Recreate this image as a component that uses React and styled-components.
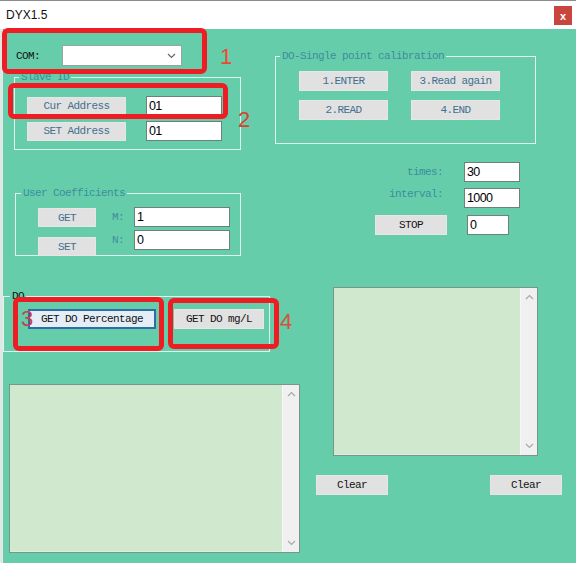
import React from 'react'
import styled, { createGlobalStyle } from 'styled-components'

const GlobalStyle = createGlobalStyle`
  *, *::before, *::after { box-sizing: border-box; }
  html, body { margin: 0; padding: 0; background: #66cdaa; }
  body { width: 576px; height: 563px; overflow: hidden; }
`;

const dlgFont = `"Liberation Mono", "DejaVu Sans Mono", monospace`;

const Window = styled.div`
    position: relative;
    width: 576px;
    height: 563px;
    display: flex;
    flex-direction: column;
    font-family: ${dlgFont};
    font-size: 11px;
    letter-spacing: -0.6px;
    color: #111;
`;

const TitleBar = styled.div`
    height: 29px;
    border-top: 1px solid #8c8c8c;
    background: #fff;
    display: flex;
    align-items: center;
    justify-content: space-between;
    padding: 0 4px 0 6px;
    font-family: "Liberation Sans", Arial, sans-serif;
    font-size: 12px;
    letter-spacing: 0;
    color: #111;
`;

const CloseBtn = styled.div`
    width: 18px;
    height: 19px;
    margin-top: 1px;
    background: #c8463d;
    color: #fff;
    display: flex;
    align-items: center;
    justify-content: center;
    font-size: 11px;
    font-weight: bold;
`;

const Body = styled.div`
    flex: 1;
    display: flex;
    background: #66cdaa;
    border-left: 3px solid #dfe8e4;
`;

const Column = styled.div`
    width: ${p => p.$w ? `${p.$w}px` : 'auto'};
    flex: ${p => p.$w ? 'none' : '1'};
    display: flex;
    flex-direction: column;
    align-items: flex-start;
`;

const ComRow = styled.div`
    margin: 16px 0 0 13px;
    display: flex;
    align-items: center;
`;

const ComLabel = styled.span`
    width: 46px;
`;

const Combo = styled.div`
    width: 120px;
    height: 21px;
    background: #fff;
    border: 1px solid #9aa39f;
    display: flex;
    align-items: center;
    justify-content: flex-end;
    padding-right: 5px;
`;

const Group = styled.fieldset`
    margin: ${p => p.$mt}px 0 0 ${p => p.$ml || 0}px;
    padding: 0;
    min-inline-size: 0;
    width: ${p => p.$w}px;
    height: ${p => p.$h}px;
    border: 1px solid rgba(255, 255, 255, 0.8);
`;

const Legend = styled.legend`
    margin-left: ${p => p.$ml ?? 4}px;
    padding: 0 2px;
    line-height: 12px;
    color: ${p => p.$dark ? '#111' : '#3b8e9e'};
`;

const Inner = styled.div`
    padding: ${p => p.$pt}px 0 0 ${p => p.$pl}px;
    display: flex;
    flex-direction: ${p => p.$col ? 'column' : 'row'};
    gap: ${p => p.$gap || 0}px;
`;

const Row = styled.div`
    display: flex;
    align-items: center;
    gap: ${p => p.$gap || 0}px;
`;

const Stack = styled.div`
    display: flex;
    flex-direction: column;
    gap: ${p => p.$gap}px;
    padding-top: ${p => p.$pt || 0}px;
`;

const Btn = styled.button`
    width: ${p => p.$w}px;
    height: ${p => p.$h || 20}px;
    padding: 0;
    background: ${p => p.$focus ? '#e5eef7' : '#e1e1e1'};
    border: ${p => p.$focus ? '2px solid #2b6ea8' : '1px solid #e6e6e6'};
    font: inherit;
    letter-spacing: inherit;
    color: ${p => p.$blue ? '#43708f' : '#111'};
    white-space: nowrap;
`;

const Input = styled.input`
    width: ${p => p.$w}px;
    height: 20px;
    margin-top: ${p => p.$mt || 0}px;
    padding: 0 0 1px 2px;
    background: #fff;
    border: 1px solid #6f807a;
    font-family: "Liberation Sans", Arial, sans-serif;
    font-size: 12.5px;
    letter-spacing: -0.6px;
    color: #000;
    outline: none;
`;

const Label = styled.span`
    width: ${p => p.$w}px;
    text-align: ${p => p.$right ? 'right' : 'left'};
    align-self: ${p => p.$top ? 'flex-start' : 'center'};
    line-height: 12px;
    color: #3b8e9e;
`;

const BtnGrid = styled.div`
    display: grid;
    grid-template-columns: 89px 89px;
    column-gap: 23px;
    row-gap: 9px;
    padding: 9px 0 0 23px;
`;

const ParamRow = styled.div`
    display: flex;
    align-items: center;
    margin-top: ${p => p.$mt}px;
    padding-left: ${p => p.$pl}px;
    gap: ${p => p.$gap}px;
`;

const TextBox = styled.div`
    margin: ${p => p.$mt}px 0 0 ${p => p.$ml}px;
    width: ${p => p.$w}px;
    height: ${p => p.$h}px;
    flex: none;
    display: flex;
    border: 1px solid #7a958b;
    background: #cfe8ce;
`;

const TextArea = styled.div`
    flex: 1;
    border-bottom: 1px solid #dcefdc;
`;

const ScrollBar = styled.div`
    width: 17px;
    background: #f0f0f0;
    border-left: 1px solid #f7f7f7;
    display: flex;
    flex-direction: column;
    justify-content: space-between;
    align-items: center;
    padding: 6px 0 6px;
`;

const ClearRow = styled.div`
    margin: 19px 0 0 41px;
    display: flex;
    gap: 102px;
`;

const Mark = styled.div`
    position: absolute;
    left: ${p => p.$x}px;
    top: ${p => p.$y}px;
    width: ${p => p.$w}px;
    height: ${p => p.$h}px;
    border: 5px solid #ee1d23;
    border-radius: 6px;
    pointer-events: none;
`;

const Num = styled.span`
    position: absolute;
    left: ${p => p.$x}px;
    top: ${p => p.$y}px;
    font-family: "Liberation Sans", Arial, sans-serif;
    font-size: 22px;
    line-height: 22px;
    letter-spacing: 0;
    color: ${p => p.$c};
`;

const Chevron = ({ up, color = '#a8a8a8' }) => (
  <svg width="9" height="6" viewBox="0 0 9 6">
    <polyline
      points={up ? '1,5 4.5,1.5 8,5' : '1,1 4.5,4.5 8,1'}
      fill="none"
      stroke={color}
      strokeWidth="1.2"
    />
  </svg>
)

const Log = props => (
  <TextBox {...props}>
    <TextArea />
    <ScrollBar>
      <Chevron up />
      <Chevron />
    </ScrollBar>
  </TextBox>
)

const App = () => {
  return (
    <Window>
      <GlobalStyle />
      <TitleBar>
        <span>DYX1.5</span>
        <CloseBtn>x</CloseBtn>
      </TitleBar>
      <Body>
        <Column $w={272}>
          <ComRow>
            <ComLabel>COM:</ComLabel>
            <Combo>
              <Chevron color="#666" />
            </Combo>
          </ComRow>

          <Group $mt={5} $ml={11} $w={227} $h={79}>
            <Legend>Slave ID</Legend>
            <Inner $col $pt={13} $pl={12} $gap={5}>
              <Row $gap={20}>
                <Btn $w={99} $h={19} $blue>Cur Address</Btn>
                <Input $w={76} readOnly value="01" />
              </Row>
              <Row $gap={20}>
                <Btn $w={99} $h={19} $blue>SET Address</Btn>
                <Input $w={76} readOnly value="01" />
              </Row>
            </Inner>
          </Group>

          <Group $mt={37} $ml={12} $w={226} $h={69}>
            <Legend $ml={5}>User Coefficients</Legend>
            <Inner $pt={8} $pl={22}>
              <Stack $gap={10} $pt={1}>
                <Btn $w={58} $h={19} $blue>GET</Btn>
                <Btn $w={58} $h={19} $blue>SET</Btn>
              </Stack>
              <Stack $gap={3}>
                <Row>
                  <Label $w={38} style={{ paddingLeft: 16 }}>M:</Label>
                  <Input $w={96} readOnly value="1" />
                </Row>
                <Row>
                  <Label $w={38} style={{ paddingLeft: 16 }}>N:</Label>
                  <Input $w={96} readOnly value="0" />
                </Row>
              </Stack>
            </Inner>
          </Group>

          <Group $mt={34} $w={267} $h={62}>
            <Legend $ml={6} $dark>DO</Legend>
            <Inner $pt={7} $pl={24} $gap={18}>
              <Btn $w={128} $focus>GET DO Percentage</Btn>
              <Btn $w={90}>GET DO mg/L</Btn>
            </Inner>
          </Group>

          <Log $mt={32} $ml={6} $w={291} $h={169} />
        </Column>

        <Column>
          <Group $mt={21} $w={261} $h={94}>
            <Legend>DO-Single point calibration</Legend>
            <BtnGrid>
              <Btn $w={89} $blue>1.ENTER</Btn>
              <Btn $w={89} $blue>3.Read again</Btn>
              <Btn $w={89} $blue>2.READ</Btn>
              <Btn $w={89} $blue>4.END</Btn>
            </BtnGrid>
          </Group>

          <ParamRow $mt={18} $pl={96} $gap={21}>
            <Label $w={72} $right>times:</Label>
            <Input $w={56} readOnly value="30" />
          </ParamRow>
          <ParamRow $mt={6} $pl={96} $gap={21}>
            <Label $w={72} $right $top>interval:</Label>
            <Input $w={56} readOnly value="1000" />
          </ParamRow>
          <ParamRow $mt={6} $pl={100} $gap={20}>
            <Btn $w={72}>STOP</Btn>
            <Input $w={42} $mt={1} readOnly value="0" />
          </ParamRow>

          <Log $mt={52} $ml={58} $w={205} $h={169} />

          <ClearRow>
            <Btn $w={72}>Clear</Btn>
            <Btn $w={72}>Clear</Btn>
          </ClearRow>
        </Column>
      </Body>

      <Mark $x={2} $y={28} $w={205} $h={46} />
      <Mark $x={8} $y={83} $w={220} $h={36} />
      <Mark $x={13} $y={297} $w={151} $h={54} />
      <Mark $x={168} $y={298} $w={111} $h={51} />
      <Num $x={220} $y={46} $c="#e84a32">1</Num>
      <Num $x={238} $y={109} $c="#d24535">2</Num>
      <Num $x={21} $y={308} $c="#c8414f">3</Num>
      <Num $x={280} $y={311} $c="#d5523a">4</Num>
    </Window>
  )
}

export default App
